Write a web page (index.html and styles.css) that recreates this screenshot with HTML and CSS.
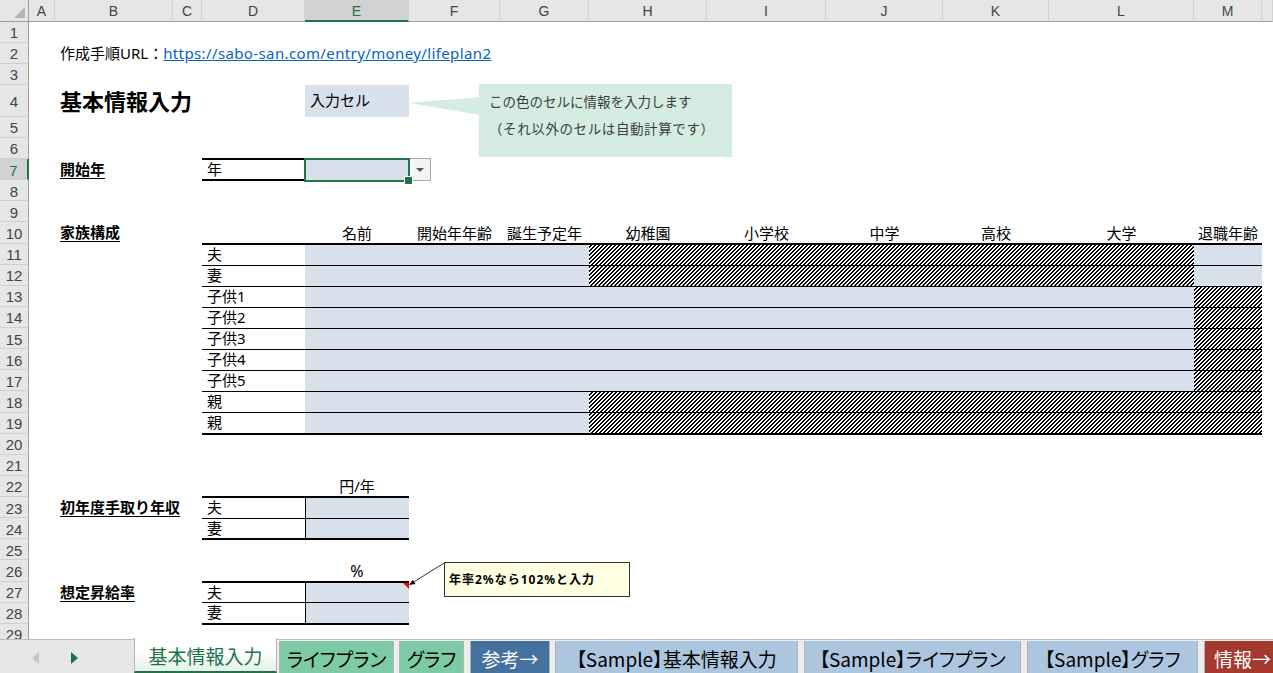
FILE: index.html
```html
<!DOCTYPE html>
<html lang="ja">
<head>
    <meta charset="UTF-8">
    <title>ライフプラン表 - 基本情報入力</title>
    <link rel="stylesheet" href="styles.css">
</head>
<body>
<div class="book">

    <!-- Sheet -->
    <div class="sheet">
        <!-- column headers -->
        <div class="corner"></div>
        <div class="colhead">A</div>
        <div class="colhead">B</div>
        <div class="colhead">C</div>
        <div class="colhead">D</div>
        <div class="colhead sel">E</div>
        <div class="colhead">F</div>
        <div class="colhead">G</div>
        <div class="colhead">H</div>
        <div class="colhead">I</div>
        <div class="colhead">J</div>
        <div class="colhead">K</div>
        <div class="colhead">L</div>
        <div class="colhead">M</div>
        <div class="colhead"></div>

        <!-- row headers -->
        <div class="rowhead">1</div>
        <div class="rowhead">2</div>
        <div class="rowhead">3</div>
        <div class="rowhead">4</div>
        <div class="rowhead">5</div>
        <div class="rowhead">6</div>
        <div class="rowhead sel">7</div>
        <div class="rowhead">8</div>
        <div class="rowhead">9</div>
        <div class="rowhead">10</div>
        <div class="rowhead">11</div>
        <div class="rowhead">12</div>
        <div class="rowhead">13</div>
        <div class="rowhead">14</div>
        <div class="rowhead">15</div>
        <div class="rowhead">16</div>
        <div class="rowhead">17</div>
        <div class="rowhead">18</div>
        <div class="rowhead">19</div>
        <div class="rowhead">20</div>
        <div class="rowhead">21</div>
        <div class="rowhead">22</div>
        <div class="rowhead">23</div>
        <div class="rowhead">24</div>
        <div class="rowhead">25</div>
        <div class="rowhead">26</div>
        <div class="rowhead">27</div>
        <div class="rowhead">28</div>
        <div class="rowhead">29</div>

        <!-- row 2 -->
        <div class="url">作成手順URL：<a href="#">https://sabo-san.com/entry/money/lifeplan2</a></div>

        <!-- row 4 -->
        <div class="title">基本情報入力</div>
        <div class="legend-in">入力セル</div>

        <!-- row 7 -->
        <div class="lbl lbl-start"><span>開始年</span></div>
        <div class="year-unit">年</div>
        <div class="year-in"></div>
        <div class="dropdown"></div>

        <!-- family table -->
        <div class="lbl lbl-family"><span>家族構成</span></div>
        <div class="fam-head">
            <span>名前</span>
            <span>開始年年齢</span>
            <span>誕生予定年</span>
            <span>幼稚園</span>
            <span>小学校</span>
            <span>中学</span>
            <span>高校</span>
            <span>大学</span>
            <span>退職年齢</span>
        </div>
        <div class="family">
            <div class="frow"><span class="name">夫</span><span class="in eg"></span><span class="hatch hl"></span><span class="in m"></span></div>
            <div class="frow"><span class="name">妻</span><span class="in eg"></span><span class="hatch hl"></span><span class="in m"></span></div>
            <div class="frow"><span class="name">子供1</span><span class="in el"></span><span class="hatch m"></span></div>
            <div class="frow"><span class="name">子供2</span><span class="in el"></span><span class="hatch m"></span></div>
            <div class="frow"><span class="name">子供3</span><span class="in el"></span><span class="hatch m"></span></div>
            <div class="frow"><span class="name">子供4</span><span class="in el"></span><span class="hatch m"></span></div>
            <div class="frow"><span class="name">子供5</span><span class="in el"></span><span class="hatch m"></span></div>
            <div class="frow"><span class="name">親</span><span class="in eg"></span><span class="hatch hm"></span></div>
            <div class="frow"><span class="name">親</span><span class="in eg"></span><span class="hatch hm"></span></div>
        </div>

        <!-- income -->
        <div class="unit unit-yen">円/年</div>
        <div class="lbl lbl-income"><span>初年度手取り年収</span></div>
        <div class="pair income">
            <div class="pair-row"><span class="name">夫</span><span class="in"></span></div>
            <div class="pair-row"><span class="name">妻</span><span class="in"></span></div>
        </div>

        <!-- raise rate -->
        <div class="unit unit-pct">%</div>
        <div class="lbl lbl-raise"><span>想定昇給率</span></div>
        <div class="pair raise">
            <div class="pair-row"><span class="name">夫</span><span class="in has-note"></span></div>
            <div class="pair-row"><span class="name">妻</span><span class="in"></span></div>
        </div>

        <!-- shapes over the sheet -->
        <div class="callout">
            <svg class="callout-tail" width="72" height="40" viewBox="0 0 72 40">
                <polygon points="72,13 0,19 72,31" fill="#d5ece2"/>
            </svg>
            <p>この色のセルに情報を入力します</p>
            <p class="callout-sub">（それ以外のセルは自動計算です）</p>
        </div>

        <svg class="note-arrow" width="42" height="30" viewBox="0 0 42 30">
            <line x1="39" y1="3" x2="8" y2="22.5" stroke="#333" stroke-width="1"/>
            <polygon points="4,25 10.4,23.9 7.8,19.7" fill="#000"/>
        </svg>
        <div class="note">年率2%なら102%と入力</div>
    </div>

    <!-- Sheet tabs -->
    <div class="tabbar">
        <div class="tab-nav"><span class="nav-prev"></span><span class="nav-next"></span></div>
        <div class="tab active t-basic">基本情報入力</div>
        <div class="tab green t-plan">ライフプラン</div>
        <div class="tab green t-graph">グラフ</div>
        <div class="tab navy t-ref">参考→</div>
        <div class="tab sky t-s-basic">【Sample】基本情報入力</div>
        <div class="tab sky t-s-plan">【Sample】ライフプラン</div>
        <div class="tab sky t-s-graph">【Sample】グラフ</div>
        <div class="tab brick t-info">情報→</div>
    </div>

</div>
</body>
</html>
```

FILE: styles.css
```css
/* Reset */
* {
    margin: 0;
    padding: 0;
    box-sizing: border-box;
}

body {
    width: 1273px;
    height: 673px;
    overflow: hidden;
    background: #fff;
    color: #000;
    font-family: "Noto Sans", "Noto Sans CJK JP", sans-serif;
    font-size: 15px;
    line-height: 1;
}

.book {
    display: flex;
    flex-direction: column;
    height: 673px;
}

/* Sheet grid: columns A..N, header row + rows 1..29 */
.sheet {
    flex: 1;
    position: relative;
    overflow: hidden;
    display: grid;
    grid-template-columns:
        [rh] 29px [a] 26px [b] 118px [c] 29px [d] 103px [e] 104px [f] 91px
        [g] 89px [h] 118px [i] 119px [j] 117px [k] 106px [l] 145px [m] 68px [n] 11px [end];
    grid-template-rows: 21.5px 21px 21px 21px 32.3px repeat(25, 21.125px);
    align-content: start;
}

/* Headers */
.corner {
    position: relative;
    background: #e6e6e6;
    border-right: 1px solid #9e9e9e;
    border-bottom: 1px solid #9e9e9e;
}

.corner::after {
    content: "";
    position: absolute;
    right: 3px;
    bottom: 3px;
    border-left: 11px solid transparent;
    border-bottom: 11px solid #b5b5b5;
}

.colhead {
    background: #e6e6e6;
    border-bottom: 1px solid #9e9e9e;
    border-right: 1px solid #d2d2d2;
    color: #444;
    font-family: "Liberation Sans", sans-serif;
    font-size: 14px;
    display: flex;
    align-items: center;
    justify-content: center;
    padding-top: 2px;
}

.colhead.sel {
    background: #d2d2d2;
    color: #217346;
    border-bottom: 2px solid #217346;
}

.rowhead {
    grid-column: rh;
    background: #e6e6e6;
    border-right: 1px solid #9e9e9e;
    border-bottom: 1px solid #cfcfcf;
    color: #444;
    font-family: "Liberation Sans", sans-serif;
    font-size: 15px;
    display: flex;
    align-items: center;
    justify-content: center;
    padding-top: 2px;
}

.rowhead.sel {
    background: #d2d2d2;
    color: #217346;
    border-right: 2px solid #217346;
}

/* Cell content */
.url {
    grid-row: 3;
    grid-column: b / end;
    display: flex;
    align-items: center;
    padding-left: 5px;
    white-space: nowrap;
}

.url a {
    color: #0563c1;
    text-decoration: underline;
    letter-spacing: 0.38px;
}

.title {
    grid-row: 5;
    grid-column: b / e;
    display: flex;
    align-items: center;
    padding-left: 5px;
    font-size: 22px;
    font-weight: bold;
}

.legend-in {
    grid-row: 5;
    grid-column: e;
    display: flex;
    align-items: center;
    padding-left: 5px;
    background: #d8e0ec;
}

.lbl {
    grid-column: b / d;
    display: flex;
    align-items: center;
    padding-left: 5px;
    font-weight: bold;
    white-space: nowrap;
}

.lbl span {
    text-decoration: underline;
    text-underline-offset: 3px;
}

.lbl-start { grid-row: 8; }
.lbl-family { grid-row: 11; }
.lbl-income { grid-row: 24; }
.lbl-raise { grid-row: 28; }

.year-unit {
    grid-row: 8;
    grid-column: d;
    margin: -1px 0;
    border-top: 2px solid #000;
    border-bottom: 2px solid #000;
    display: flex;
    align-items: center;
    padding-left: 5px;
}

.year-in {
    grid-row: 8;
    grid-column: e;
    margin: -1px 0;
    position: relative;
    background: #d8e0ec;
}

/* selected cell frame + fill handle */
.year-in::before {
    content: "";
    position: absolute;
    inset: 0 -1px -1px -1px;
    border: 2px solid #217346;
}

.year-in::after {
    content: "";
    position: absolute;
    right: -4px;
    bottom: -4px;
    width: 7px;
    height: 7px;
    background: #217346;
    border: 1px solid #fff;
}

.dropdown {
    grid-row: 8;
    grid-column: f;
    justify-self: start;
    align-self: center;
    width: 22px;
    height: 23px;
    border: 1px solid #a9a9a9;
    background: #f4f4f4;
    display: flex;
    align-items: center;
    justify-content: center;
}

.dropdown::after {
    content: "";
    border-left: 4px solid transparent;
    border-right: 4px solid transparent;
    border-top: 4px solid #555;
}

/* Family table */
.fam-head {
    grid-row: 11;
    grid-column: e / n;
    display: grid;
    grid-template-columns: 104px 91px 89px 118px 119px 117px 106px 145px 68px;
    align-items: center;
    text-align: center;
    white-space: nowrap;
    padding-top: 1px;
}

.family {
    grid-row: 12 / 21;
    grid-column: d / n;
    margin: -1px 0;
    border-top: 2px solid #000;
    border-bottom: 2px solid #000;
    display: flex;
    flex-direction: column;
}

.frow {
    flex: 1;
    display: flex;
}

.frow + .frow {
    border-top: 1px solid #000;
}

.name {
    width: 103px;
    flex-shrink: 0;
    display: flex;
    align-items: center;
    padding-left: 5px;
}

.in {
    background: #d8e0ec;
}

/* dark up-diagonal fill, 4px tile */
.hatch {
    background-color: #fff;
    background-image: url("data:image/svg+xml,%3Csvg xmlns='http://www.w3.org/2000/svg' width='4' height='4' shape-rendering='crispEdges'%3E%3Cpath d='M3 0h1v1H3zM0 0h1v1H0zM2 1h2v1H2zM1 2h2v1H1zM0 3h2v1H0z'/%3E%3C/svg%3E");
    background-size: 4px 4px;
    background-attachment: fixed;
}

.eg { width: 284px; }
.hl { width: 605px; }
.m  { width: 68px; }
.el { width: 889px; }
.hm { width: 673px; }

/* Two row tables */
.unit {
    grid-column: e;
    display: flex;
    align-items: center;
    justify-content: center;
}

.unit-yen { grid-row: 23; }
.unit-pct { grid-row: 27; font-size: 16px; }

.pair {
    grid-column: d / f;
    margin: -1px 0;
    border-top: 2px solid #000;
    border-bottom: 2px solid #000;
    display: flex;
    flex-direction: column;
}

.income { grid-row: 24 / 26; }
.raise { grid-row: 28 / 30; }

.pair-row {
    flex: 1;
    display: flex;
}

.pair-row + .pair-row {
    border-top: 1px solid #000;
}

.pair .in {
    flex: 1;
    border-left: 1px solid #000;
}

.has-note {
    position: relative;
}

.has-note::after {
    content: "";
    position: absolute;
    top: 0;
    right: 0;
    border-left: 6px solid transparent;
    border-top: 6px solid #ff0000;
}

/* Shapes */
.callout {
    position: absolute;
    left: 479px;
    top: 84px;
    width: 253px;
    height: 73px;
    background: #d5ece2;
    padding: 5px 0 0 10px;
    color: #3c3c3c;
    font-size: 13.5px;
    line-height: 27px;
    white-space: nowrap;
}

.callout-sub {
    letter-spacing: 0.6px;
}

.callout-tail {
    position: absolute;
    left: -71px;
    top: 0;
}

.note-arrow {
    position: absolute;
    left: 405px;
    top: 560px;
}

.note {
    position: absolute;
    left: 444px;
    top: 562px;
    width: 186px;
    height: 35px;
    background: #ffffe1;
    border: 1px solid #333;
    display: flex;
    align-items: center;
    padding-left: 4px;
    font-size: 12px;
    font-weight: bold;
    letter-spacing: 1px;
    white-space: nowrap;
}

/* Sheet tabs */
.tabbar {
    height: 34px;
    flex-shrink: 0;
    display: flex;
    align-items: flex-end;
    background: #ededed;
    border-top: 1px solid #bdbdbd;
    font-family: "Noto Sans CJK JP", sans-serif;
    font-feature-settings: "palt";
    font-size: 19px;
    white-space: nowrap;
}

.tab-nav {
    width: 134px;
    height: 100%;
    flex-shrink: 0;
    background: #e6e6e6;
    position: relative;
}

.nav-prev {
    position: absolute;
    left: 32px;
    top: 12px;
    border-top: 6px solid transparent;
    border-bottom: 6px solid transparent;
    border-right: 7px solid #c3c3c3;
}

.nav-next {
    position: absolute;
    left: 71px;
    top: 12px;
    border-top: 6px solid transparent;
    border-bottom: 6px solid transparent;
    border-left: 7px solid #217346;
}

.tab {
    height: 32px;
    flex-shrink: 0;
    margin-left: 5px;
    border-left: 1px solid #b4b4b4;
    border-right: 1px solid #b4b4b4;
    display: flex;
    align-items: center;
    justify-content: center;
    padding-top: 2px;
}

.tab.active {
    height: 35px;
    margin-left: 0;
    margin-top: -1px;
    background: linear-gradient(#fff 40%, #e4f1e9);
    border-bottom: 2px solid #217346;
    color: #217346;
}

.tab.active + .tab { margin-left: 2px; }

.green { background: #7dcba6; }
.navy  { background: #45719f; color: #fff; }
.sky   { background: #adc6e0; }
.brick { background: #a6392e; color: #fff; }

.t-basic   { width: 143px; }
.t-plan    { width: 115px; }
.t-graph   { width: 65px; }
.t-ref     { width: 80px; margin-left: 6px; }
.t-s-basic { width: 243px; }
.t-s-plan  { width: 217px; margin-left: 6px; }
.t-s-graph { width: 171px; margin-left: 6px; }
.t-info    { width: 80px; margin-left: 6px; justify-content: flex-start; padding-left: 9px; }
```
